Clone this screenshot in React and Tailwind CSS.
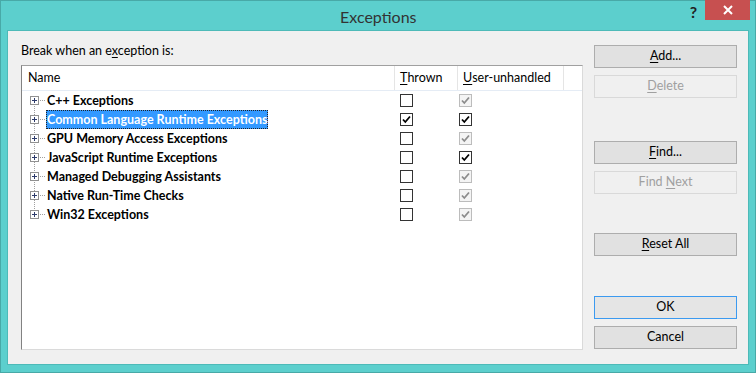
import React from 'react'

const FONT = { fontFamily: 'Lato, "Noto Sans", "Segoe UI", sans-serif' }

const rows = [
  { name: 'C++ Exceptions', thrown: false, user: 'dis' },
  { name: 'Common Language Runtime Exceptions', thrown: true, user: 'on', selected: true },
  { name: 'GPU Memory Access Exceptions', thrown: false, user: 'dis' },
  { name: 'JavaScript Runtime Exceptions', thrown: false, user: 'on' },
  { name: 'Managed Debugging Assistants', thrown: false, user: 'dis' },
  { name: 'Native Run-Time Checks', thrown: false, user: 'dis' },
  { name: 'Win32 Exceptions', thrown: false, user: 'dis' },
]

function Check({ checked, disabled }) {
  return (
    <div
      className={
        'w-[13px] h-[13px] border flex items-center justify-center ' +
        (disabled ? 'border-[#bcbcbc] bg-[#f4f4f4]' : 'border-[#333333] bg-white')
      }
    >
      {checked && (
        <svg width="9" height="9" viewBox="0 0 9 9">
          <path
            d="M1 4.5 L3.3 7 L8 1.5"
            fill="none"
            stroke={disabled ? '#8c8c8c' : '#000'}
            strokeWidth="1.8"
          />
        </svg>
      )}
    </div>
  )
}

function PlusBox() {
  return (
    <div className="w-[9px] h-[9px] border border-[#919191] bg-white flex items-center justify-center relative">
      <div className="absolute w-[5px] h-px bg-[#2d3b6b]" />
      <div className="absolute w-px h-[5px] bg-[#2d3b6b]" />
    </div>
  )
}

function Btn({ children, disabled, primary, className = '' }) {
  return (
    <div
      className={
        'h-[23px] w-[143px] flex items-center justify-center text-[12.5px] border ' +
        (disabled
          ? 'border-[#d9d9d9] bg-[#f0f0f0] text-[#a0a0a0] '
          : primary
          ? 'border-[#3c9af0] bg-[#e5e5e5] text-black '
          : 'border-[#adadad] bg-[#e1e1e1] text-black ') +
        className
      }
    >
      {children}
    </div>
  )
}

export default function App() {
  return (
    <div
      className="w-[756px] h-[373px] bg-[#5ccfcd] border border-[#48a9a7] flex flex-col"
      style={FONT}
    >
      {/* title bar */}
      <div className="h-[29px] flex items-start shrink-0">
        <div className="flex-1 text-center text-[16px] text-[#333] pt-[4px] pl-[66px]">Exceptions</div>
        <div className="text-[16px] font-bold text-[#222] mt-[1px] mr-[8px] leading-[20px]">?</div>
        <div className="w-[45px] h-[20px] bg-[#c75050] text-white flex items-center justify-center mr-[5px] mt-[-1px]">
          <svg width="10" height="10" viewBox="0 0 10 10">
            <path d="M1 1 L9 9 M9 1 L1 9" stroke="#fff" strokeWidth="2" />
          </svg>
        </div>
      </div>

      {/* client */}
      <div className="mx-[6px] h-[335px] bg-[#f0f0f0] border border-[#4dbab8] flex text-[12.5px] text-black">
        <div className="ml-[13px] w-[562px] flex flex-col">
          <div className="h-[34px] pt-[12px] leading-[16px]">
            Break when an e<u className="underline-offset-2">x</u>ception is:
          </div>
          <div className="h-[285px] bg-white border-t border-l border-t-[#a0a0a0] border-l-[#828282] border-b border-r border-b-[#dadada] border-r-[#dadada] flex flex-col">
            {/* header */}
            <div className="h-[25px] flex border-b border-[#e5ecf5] shrink-0">
              <div className="w-[373px] pl-[6px] flex items-center border-r border-[#e5e5e5]">Name</div>
              <div className="w-[63px] pl-[5px] flex items-center border-r border-[#e5e5e5]">
                <u className="underline-offset-2">T</u>hrown
              </div>
              <div className="w-[106px] pl-[5px] flex items-center border-r border-[#e5e5e5]">
                <u className="underline-offset-2">U</u>ser-unhandled
              </div>
            </div>
            {/* rows */}
            <div className="relative">
              <div className="absolute left-[12px] top-[10px] h-[114px] border-l border-dotted border-[#a0a0a0]" />
              {rows.map((r) => (
                <div key={r.name} className="h-[19px] flex items-center">
                  <div className="w-[373px] flex items-center pl-[8px]">
                    <PlusBox />
                    <div className="w-[5px] border-t border-dotted border-[#a0a0a0] mx-px" />
                    <div
                      className={
                        'font-bold leading-[17px] border border-dotted ' +
                        (r.selected ? 'bg-[#3399ff] text-white border-[#222]' : 'border-transparent')
                      }
                    >
                      {r.name}
                    </div>
                  </div>
                  <div className="w-[63px] pl-[5px]">
                    <Check checked={r.thrown} />
                  </div>
                  <div className="w-[106px] pl-px">
                    <Check checked disabled={r.user === 'dis'} />
                  </div>
                </div>
              ))}
            </div>
          </div>
        </div>

        {/* buttons */}
        <div className="ml-[11px] pt-[14px] flex flex-col">
          <Btn>
            <span><u className="underline-offset-2">A</u>dd...</span>
          </Btn>
          <Btn disabled className="mt-[7px]">
            <span><u className="underline-offset-2">D</u>elete</span>
          </Btn>
          <Btn className="mt-[43px]">
            <span><u className="underline-offset-2">F</u>ind...</span>
          </Btn>
          <Btn disabled className="mt-[7px]">
            <span>Find <u className="underline-offset-2">N</u>ext</span>
          </Btn>
          <Btn className="mt-[39px]">
            <span><u className="underline-offset-2">R</u>eset All</span>
          </Btn>
          <Btn primary className="mt-[40px]">OK</Btn>
          <Btn className="mt-[7px]">Cancel</Btn>
        </div>
      </div>
    </div>
  )
}
